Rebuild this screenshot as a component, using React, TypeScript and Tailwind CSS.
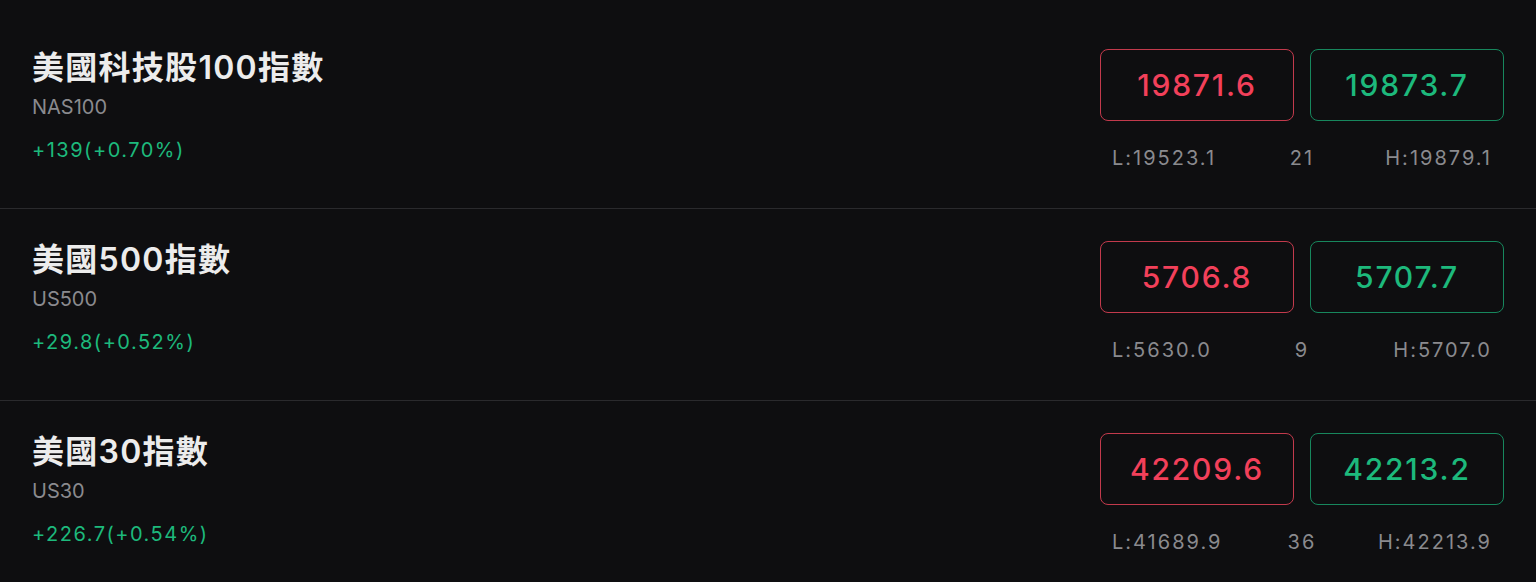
import React from "react";

type Quote = {
  name: string;
  symbol: string;
  change: string;
  bid: string;
  ask: string;
  low: string;
  spread: string;
  high: string;
};

const quotes: Quote[] = [
  { name: "美國科技股100指數", symbol: "NAS100", change: "+139(+0.70%)", bid: "19871.6", ask: "19873.7", low: "L:19523.1", spread: "21", high: "H:19879.1" },
  { name: "美國500指數", symbol: "US500", change: "+29.8(+0.52%)", bid: "5706.8", ask: "5707.7", low: "L:5630.0", spread: "9", high: "H:5707.0" },
  { name: "美國30指數", symbol: "US30", change: "+226.7(+0.54%)", bid: "42209.6", ask: "42213.2", low: "L:41689.9", spread: "36", high: "H:42213.9" },
];

function QuoteRow({ q, last }: { q: Quote; last: boolean }) {
  return (
    <div className={`flex justify-between px-8 pt-8 h-[192px] ${last ? "" : "border-b border-[#2a2a2d]"}`}>
      <div className="flex flex-col">
        <p className="text-[32px] leading-[38px] font-semibold tracking-[0.04em] text-[#ececec]">{q.name}</p>
        <p className="mt-2 text-[20px] leading-[24px] text-[#8a8a8e]">{q.symbol}</p>
        <p className="mt-[19px] text-[20px] leading-[24px] tracking-[0.075em] text-[#1db97c]">{q.change}</p>
      </div>
      <div className="w-[404px]">
        <div className="flex gap-4">
          <div className="flex-1 h-[72px] rounded-lg border border-[#c23a4c] flex items-center justify-center text-[30px] font-medium tracking-[0.06em] text-[#f2405a]">
            {q.bid}
          </div>
          <div className="flex-1 h-[72px] rounded-lg border border-[#17875d] flex items-center justify-center text-[30px] font-medium tracking-[0.06em] text-[#1db97c]">
            {q.ask}
          </div>
        </div>
        <div className="mt-[25px] grid grid-cols-3 px-3 text-[20px] leading-[24px] tracking-[0.1em] text-[#8a8a8e]">
          <span className="text-left">{q.low}</span>
          <span className="text-center">{q.spread}</span>
          <span className="text-right">{q.high}</span>
        </div>
      </div>
    </div>
  );
}

export default function App() {
  return (
    <div
      className="min-h-screen bg-[#0e0e10] pt-[17px]"
      style={{ fontFamily: 'Inter, "Noto Sans CJK TC", sans-serif' }}
    >
      {quotes.map((q, i) => (
        <QuoteRow key={q.symbol} q={q} last={i === quotes.length - 1} />
      ))}
    </div>
  );
}
